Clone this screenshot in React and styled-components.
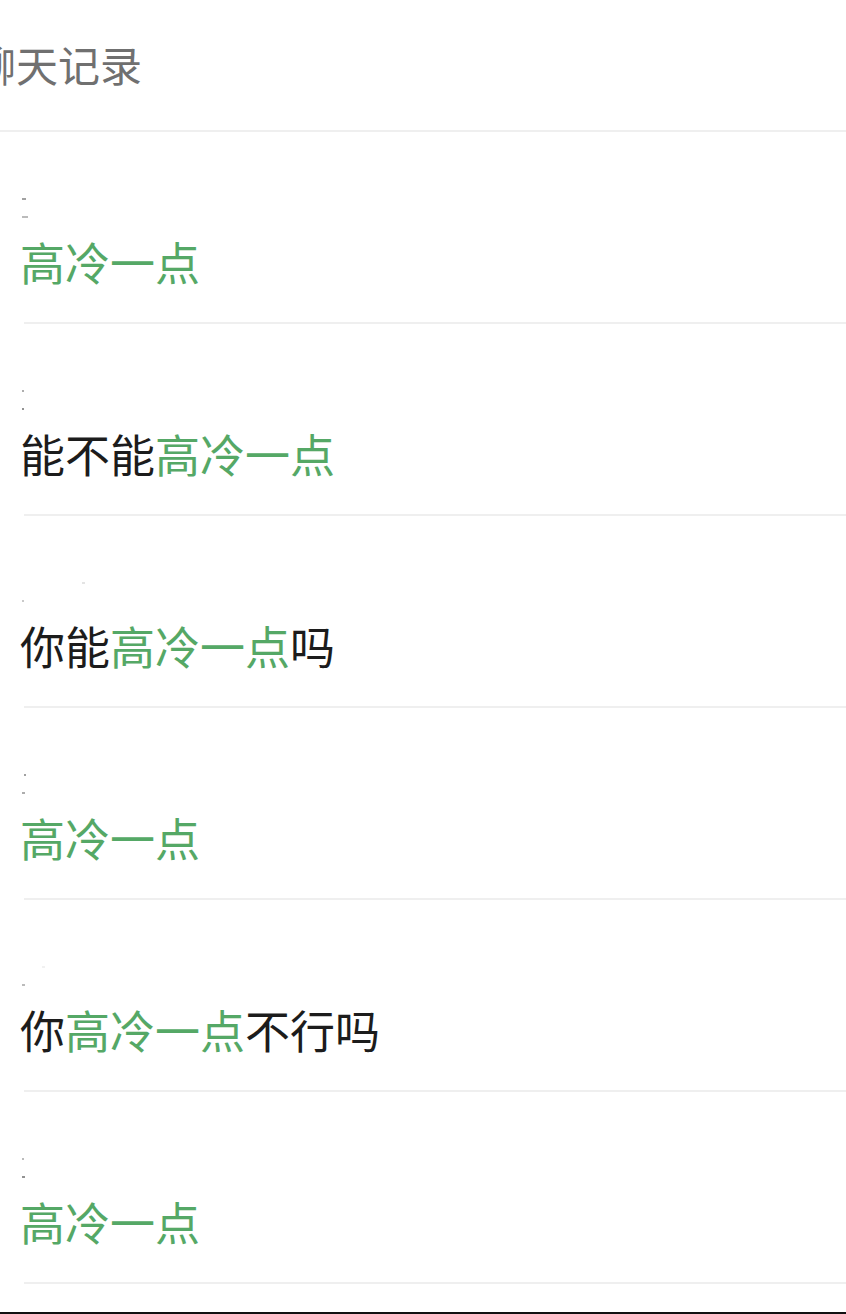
import React from "react";
import styled, { createGlobalStyle } from "styled-components";

const Global = createGlobalStyle`
  html, body { margin: 0; padding: 0; background: #ffffff; }
  body { font-family: "Noto Sans CJK SC", "Noto Sans", sans-serif; }
`;

const Page = styled.div`
  width: 846px;
  height: 1314px;
  overflow: hidden;
  background: #ffffff;
  display: flex;
  flex-direction: column;
`;

const Header = styled.header`
  height: 132px;
  box-sizing: border-box;
  border-bottom: 2px solid #efefef;
  display: flex;
  align-items: flex-start;
  padding-top: 38px;
`;

const Title = styled.h1`
  margin: 0 0 0 -26px;
  font-size: 42px;
  line-height: 52px;
  font-weight: 400;
  color: #707070;
`;

const List = styled.ul`
  list-style: none;
  margin: 0;
  padding: 0;
  flex: 1;
`;

const Item = styled.li`
  margin-left: 24px;
  height: 192px;
  box-sizing: border-box;
  border-bottom: 2px solid #efefef;
  display: flex;
  flex-direction: column;
  padding-top: 66px;
  gap: 18px;
`;

const NameRow = styled.div`
  height: 20px;
  display: flex;
  flex-direction: column;
  justify-content: space-between;
  align-items: flex-start;
  margin-left: -2px;
`;

const Speck = styled.span`
  display: block;
  width: ${(p) => p.w || 4}px;
  height: 2px;
  margin-left: ${(p) => p.x || 0}px;
  background: ${(p) => p.c || "#9a9a9a"};
  opacity: 0.8;
`;

const Message = styled.p`
  margin: 0 0 0 -4px;
  font-size: 45px;
  line-height: 52px;
  color: #1c1c1c;
  white-space: nowrap;
`;

const Hit = styled.span`
  color: #55a866;
`;

const Gap = styled.div`
  height: 28px;
`;

const BottomBar = styled.div`
  height: 2px;
  background: #111111;
`;

const items = [
  { pre: "", post: "", marks: [[4, 0, "#8a8a8a"], [6, 0, "#aaaaaa"]] },
  { pre: "能不能", post: "", marks: [[2, 0, "#999"], [2, 0, "#777"]] },
  { pre: "你能", post: "吗", marks: [[3, 60, "#ddd"], [2, 0, "#bbb"]] },
  { pre: "", post: "", marks: [[2, 2, "#888"], [3, 0, "#999"]] },
  { pre: "你", post: "不行吗", marks: [[3, 20, "#eee"], [3, 0, "#aaa"]] },
  { pre: "", post: "", marks: [[2, 0, "#aaa"], [3, 0, "#777"]] },
];

export default function App() {
  return (
    <>
      <Global />
      <Page>
        <Header>
          <Title>聊天记录</Title>
        </Header>
        <List>
          {items.map((it, i) => (
            <Item key={i}>
              <NameRow>
                {it.marks.map(([w, x, c], j) => (
                  <Speck key={j} w={w} x={x} c={c} />
                ))}
              </NameRow>
              <Message>
                {it.pre}
                <Hit>高冷一点</Hit>
                {it.post}
              </Message>
            </Item>
          ))}
        </List>
        <Gap />
        <BottomBar />
      </Page>
    </>
  );
}
